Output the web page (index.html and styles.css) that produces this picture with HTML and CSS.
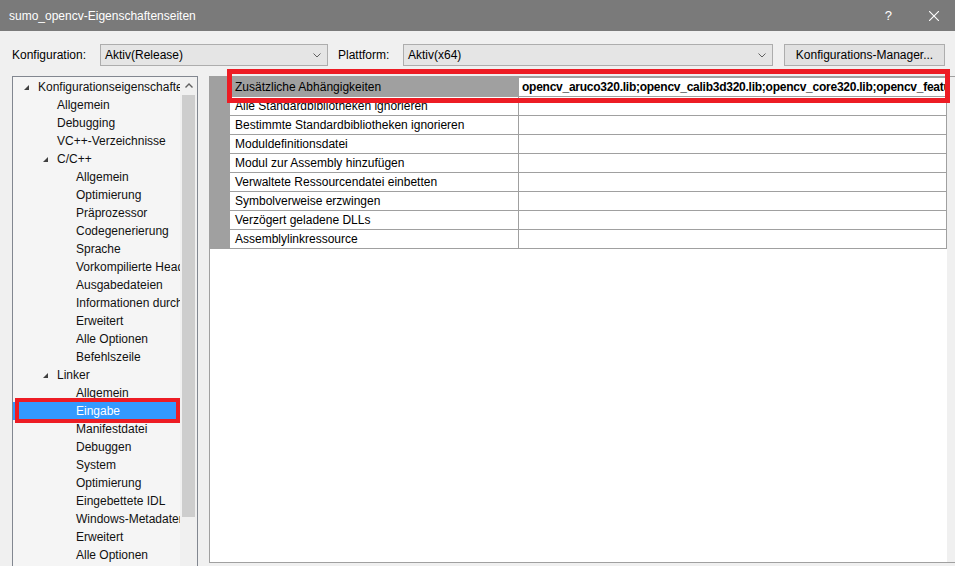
FILE: index.html
```html
<!DOCTYPE html>
<html lang="de">
<head>
  <meta charset="UTF-8">
  <title>sumo_opencv-Eigenschaftenseiten</title>
  <link rel="stylesheet" href="styles.css">
</head>
<body>

<!-- Title bar -->
<div class="titlebar">
  <span class="title">sumo_opencv-Eigenschaftenseiten</span>
  <span class="help">?</span>
  <svg class="close" width="10" height="10" viewBox="0 0 10 10">
    <path d="M0 0L10 10M10 0L0 10" stroke="#fff" stroke-width="1.1" fill="none"/>
  </svg>
</div>

<!-- Configuration row -->
<div class="toolbar">
  <span class="label label-conf">Konfiguration:</span>
  <div class="combo combo-conf">
    <span class="combo-text">Aktiv(Release)</span>
    <svg class="chev" width="8" height="5" viewBox="0 0 8 5"><path d="M0.5 0.5L4 4L7.5 0.5" fill="none" stroke="#606060"/></svg>
  </div>
  <span class="label label-plat">Plattform:</span>
  <div class="combo combo-plat">
    <span class="combo-text">Aktiv(x64)</span>
    <svg class="chev" width="8" height="5" viewBox="0 0 8 5"><path d="M0.5 0.5L4 4L7.5 0.5" fill="none" stroke="#606060"/></svg>
  </div>
  <button class="btn">Konfigurations-Manager...</button>
</div>

<div class="main">
  <!-- Tree -->
  <div class="tree-panel">
    <ul class="tree">
      <li class="item l0"><span class="arrow"></span>Konfigurationseigenschaften</li>
      <li class="item l1">Allgemein</li>
      <li class="item l1">Debugging</li>
      <li class="item l1">VC++-Verzeichnisse</li>
      <li class="item l1"><span class="arrow"></span>C/C++</li>
      <li class="item l2">Allgemein</li>
      <li class="item l2">Optimierung</li>
      <li class="item l2">Präprozessor</li>
      <li class="item l2">Codegenerierung</li>
      <li class="item l2">Sprache</li>
      <li class="item l2">Vorkompilierte Header</li>
      <li class="item l2">Ausgabedateien</li>
      <li class="item l2">Informationen durchsuchen</li>
      <li class="item l2">Erweitert</li>
      <li class="item l2">Alle Optionen</li>
      <li class="item l2">Befehlszeile</li>
      <li class="item l1"><span class="arrow"></span>Linker</li>
      <li class="item l2">Allgemein</li>
      <li class="item l2 selected">Eingabe</li>
      <li class="item l2">Manifestdatei</li>
      <li class="item l2">Debuggen</li>
      <li class="item l2">System</li>
      <li class="item l2">Optimierung</li>
      <li class="item l2">Eingebettete IDL</li>
      <li class="item l2">Windows-Metadaten</li>
      <li class="item l2">Erweitert</li>
      <li class="item l2">Alle Optionen</li>
    </ul>
    <div class="vscroll">
      <div class="vscroll-up">
        <svg width="8" height="5" viewBox="0 0 8 5"><path d="M0.5 4.5L4 1L7.5 4.5" fill="none" stroke="#606060" stroke-width="1.4"/></svg>
      </div>
      <div class="vscroll-thumb"></div>
    </div>
  </div>

  <!-- Property grid -->
  <div class="grid-panel">
    <div class="grid">
      <div class="rows">
        <div class="row active">
          <div class="gutter"></div>
          <div class="cell name">Zusätzliche Abhängigkeiten</div>
          <div class="cell value">opencv_aruco320.lib;opencv_calib3d320.lib;opencv_core320.lib;opencv_features2d320.lib;opencv_highgui320.lib</div>
        </div>
        <div class="row">
          <div class="gutter"></div>
          <div class="cell name">Alle Standardbibliotheken ignorieren</div>
          <div class="cell value"></div>
        </div>
        <div class="row">
          <div class="gutter"></div>
          <div class="cell name">Bestimmte Standardbibliotheken ignorieren</div>
          <div class="cell value"></div>
        </div>
        <div class="row">
          <div class="gutter"></div>
          <div class="cell name">Moduldefinitionsdatei</div>
          <div class="cell value"></div>
        </div>
        <div class="row">
          <div class="gutter"></div>
          <div class="cell name">Modul zur Assembly hinzufügen</div>
          <div class="cell value"></div>
        </div>
        <div class="row">
          <div class="gutter"></div>
          <div class="cell name">Verwaltete Ressourcendatei einbetten</div>
          <div class="cell value"></div>
        </div>
        <div class="row">
          <div class="gutter"></div>
          <div class="cell name">Symbolverweise erzwingen</div>
          <div class="cell value"></div>
        </div>
        <div class="row">
          <div class="gutter"></div>
          <div class="cell name">Verzögert geladene DLLs</div>
          <div class="cell value"></div>
        </div>
        <div class="row">
          <div class="gutter"></div>
          <div class="cell name">Assemblylinkressource</div>
          <div class="cell value"></div>
        </div>
      </div>
    </div>
    <div class="grid-scroll"></div>
  </div>
</div>

<!-- red annotation boxes -->
<div class="mark mark-grid"></div>
<div class="mark mark-tree"></div>

</body>
</html>
```

FILE: styles.css
```css
body {
  margin: 0;
  width: 955px;
  height: 566px;
  overflow: hidden;
  background-color: #f0f0f0;
  color: #000;
  font-family: 'Liberation Sans', Arial, sans-serif;
  font-size: 12px;
}

.titlebar {
  height: 31px;
  display: flex;
  align-items: center;
  padding-left: 9px;
  background-color: #7a7a7a;
  color: #fff;
}

.title {
  flex: 1;
  font-size: 12px;
}

.help {
  font-size: 13px;
  margin-right: 37px;
}

.close {
  margin-right: 16px;
}

.toolbar {
  display: flex;
  align-items: center;
  height: 22px;
  padding: 13px 10px 0 12px;
}

.label-conf {
  width: 88px;
}

.label-plat {
  width: 65px;
  margin-left: 10px;
}

.combo {
  box-sizing: border-box;
  height: 22px;
  display: flex;
  align-items: center;
  padding: 0 6px 0 4px;
  border: 1px solid #adadad;
  background-color: #e5e5e5;
}

.combo-text {
  flex: 1;
}

.combo-conf {
  width: 228px;
}

.combo-plat {
  width: 370px;
}

.btn {
  box-sizing: border-box;
  width: 161px;
  height: 22px;
  margin-left: 11px;
  padding: 0;
  border: 1px solid #adadad;
  background-color: #e1e1e1;
  color: #000;
  font-family: inherit;
  font-size: 12px;
}

.main {
  display: flex;
  align-items: flex-start;
  gap: 11px;
  margin-top: 10px;
  padding-left: 12px;
}

/* tree */
.tree-panel {
  flex-shrink: 0;
  box-sizing: border-box;
  width: 186px;
  height: 490px;
  display: flex;
  border: 1px solid #828790;
  border-bottom: none;
  background-color: #f5f5f5;
}

.tree {
  flex: 1;
  overflow: hidden;
  margin: 0;
  padding: 1px 0 0;
  list-style: none;
}

.item {
  height: 18px;
  line-height: 18px;
  white-space: nowrap;
  color: #111;
}

.l0 { padding-left: 25px; }
.l1 { padding-left: 44px; }
.l2 { padding-left: 63px; }

.item.selected {
  background-color: #3399ff;
  color: #fff;
}

.arrow {
  display: inline-block;
  width: 0;
  height: 0;
  margin-left: -14px;
  margin-right: 9px;
  border-left: 5px solid transparent;
  border-bottom: 5px solid #404040;
  vertical-align: 1px;
}

.vscroll {
  width: 17px;
  background-color: #f0f0f0;
}

.vscroll-up {
  height: 17px;
  display: flex;
  align-items: center;
  justify-content: center;
}

.vscroll-thumb {
  height: 422px;
  margin: 1px 2px 0;
  background-color: #cdcdcd;
}

/* property grid */
.grid-panel {
  flex-shrink: 0;
  box-sizing: border-box;
  width: 756px;
  height: 487px;
  display: flex;
  border: 1px solid #a0a0a0;
  background-color: #fff;
}

.grid {
  width: 737px;
}

.rows {
  border-top: 1px solid #a0a0a0;
}

.row {
  display: grid;
  grid-template-columns: 20px 289px 428px;
  height: 19px;
}

.gutter {
  background-color: #a0a0a0;
}

.cell {
  box-sizing: border-box;
  overflow: hidden;
  white-space: nowrap;
  line-height: 18px;
  border-right: 1px solid #a0a0a0;
  border-bottom: 1px solid #a0a0a0;
}

.name {
  padding-left: 5px;
}

.value {
  padding-left: 3px;
  font-weight: bold;
  letter-spacing: -0.25px;
}

.row.active .name {
  background-color: #a0a0a0;
}

.grid-scroll {
  width: 17px;
  background-color: #f0f0f0;
}

/* annotations */
.mark {
  position: absolute;
  box-sizing: border-box;
  border: 5px solid #ed1c24;
}

.mark-grid {
  left: 227px;
  top: 69px;
  width: 723px;
  height: 34px;
}

.mark-tree {
  left: 15px;
  top: 398px;
  width: 165px;
  height: 25px;
  border-width: 4px;
}
```
